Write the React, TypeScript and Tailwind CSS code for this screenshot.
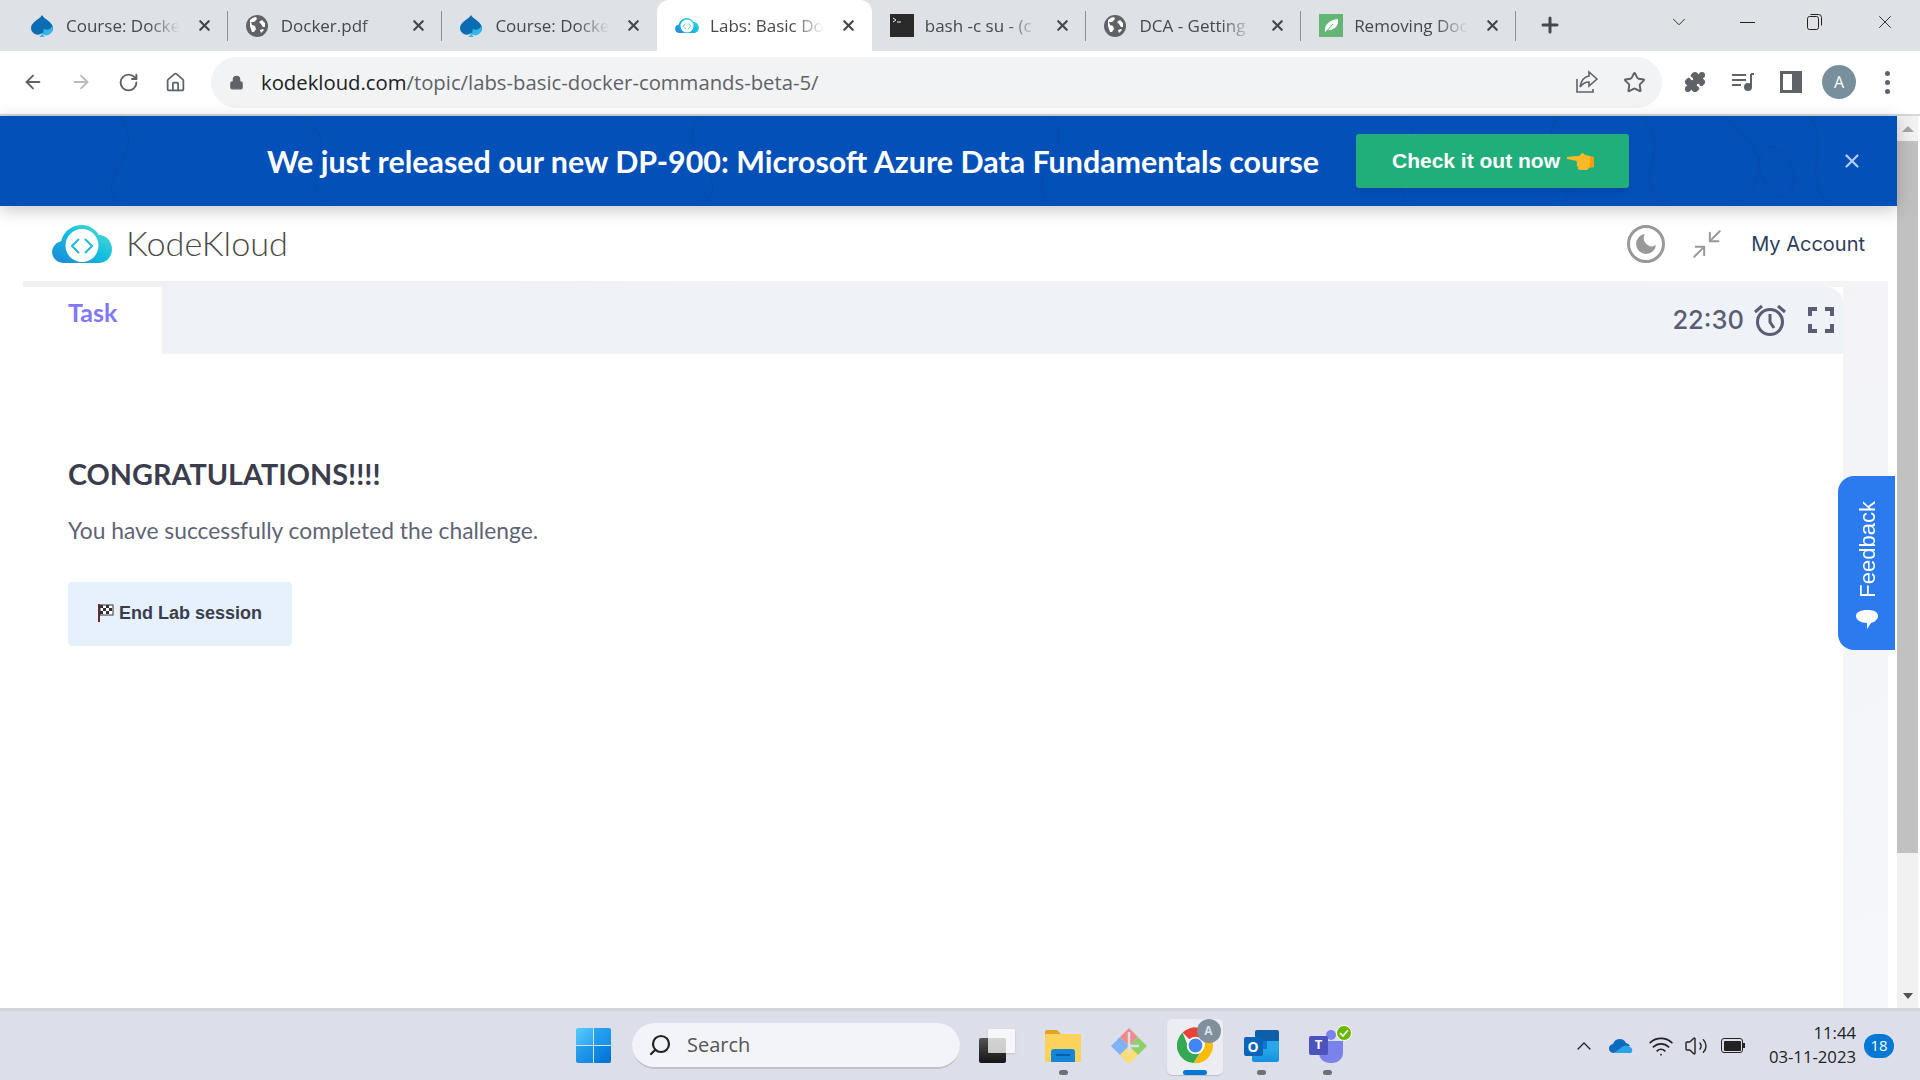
// KodeKloud lab tamamlandi ekrani: Chrome + sayfa + Windows gorev cubugu

import { ArrowLeft, ArrowRight, RotateCw, Home, Lock, Star, Puzzle, X, Plus, ChevronDown, Minimize2, Search, ChevronUp, Wifi, Volume2 } from "lucide-react";
import type { ReactNode } from "react";

const SANS = "font-['Open_Sans','Noto_Sans',sans-serif]";

function CourseIcon() {
  return (
    <svg width="22" height="22" viewBox="0 0 24 24">
      <path d="M12 0 C15 5 24 8 24 14 a7.5 7.5 0 0 1-12 6 a7.5 7.5 0 0 1-12-6 C0 8 9 5 12 0z" fill="#0a6db3" />
      <path d="M13 21 a7 7 0 0 0 10-9 a6 6 0 0 1-9 3 z" fill="#35b5e8" />
      <path d="M9 24 q3-2 3-5 q1 3 3 5z" fill="#35b5e8" />
    </svg>
  );
}

function GlobeIcon() {
  return (
    <svg width="22" height="22" viewBox="0 0 22 22">
      <circle cx="11" cy="11" r="11" fill="#5f6368" />
      <path d="M4 5 q3-3 6-3 l1 2-3 3-3 0 1 3 3 1 1 3-2 3-2 0-2-6z" fill="#fff" />
      <path d="M16 5 l3 3 0 4-2 0-2-3-2-2z" fill="#fff" />
      <path d="M14 15 l3-1 1 1-3 3z" fill="#fff" />
    </svg>
  );
}

function KodeKloudLogo({ w = 60, h = 38, id }: { w?: number; h?: number; id: string }) {
  return (
    <svg width={w} height={h} viewBox="0 0 60 38">
      <defs>
        <linearGradient id={id} x1="0" y1="1" x2="1" y2="0">
          <stop offset="0" stopColor="#1c86d8" />
          <stop offset="0.55" stopColor="#14c0e0" />
          <stop offset="1" stopColor="#62e0c8" />
        </linearGradient>
      </defs>
      <path d="M11 38 a11 11 0 0 1-2-21.8 C12 6 20 0 30 0 c8 0 14 5 17 10 c7 0 13 6 13 14 c0 8-6 14-13 14z" fill={`url(#${id})`} />
      <circle cx="30" cy="20.5" r="16.5" fill="#fff" />
      <path d="M27 14 l-7 7 7 7 M33 14 l7 7-7 7" fill="none" stroke="#1cb8e0" strokeWidth="2" />
    </svg>
  );
}

function BashIcon() {
  return (
    <svg width="24" height="23" viewBox="0 0 24 23">
      <rect width="24" height="23" fill="#2a2a2a" />
      <path d="M3 4 l3 2-3 2 M7 8h4" stroke="#eee" strokeWidth="1" fill="none" />
    </svg>
  );
}

function LeafIcon() {
  return (
    <svg width="24" height="23" viewBox="0 0 24 23">
      <rect width="24" height="23" fill="#62b574" />
      <path d="M6 18 C5 10 11 6 19 5 C20 12 15 17 8 16 L6 19z" fill="#fff" />
      <path d="M6 19 L14 10" stroke="#62b574" strokeWidth="1" />
    </svg>
  );
}

const tabs: { title: string; icon: ReactNode; active?: boolean; sep?: boolean }[] = [
  { title: "Course: Docke", icon: <CourseIcon />, sep: true },
  { title: "Docker.pdf", icon: <GlobeIcon />, sep: true },
  { title: "Course: Docke", icon: <CourseIcon /> },
  { title: "Labs: Basic Do", icon: <KodeKloudLogo w={24} h={15} id="kk-fav" />, active: true },
  { title: "bash -c su - (c", icon: <BashIcon />, sep: true },
  { title: "DCA - Getting", icon: <GlobeIcon />, sep: true },
  { title: "Removing Doc", icon: <LeafIcon />, sep: true },
];

function ChromeTab({ title, icon, active, sep }: { title: string; icon: ReactNode; active?: boolean; sep?: boolean }) {
  return (
    <div className={`relative flex h-[51px] w-[214.7px] items-center pl-[18px] ${active ? "rounded-t-[12px] bg-white" : ""}`}>
      <div className="flex w-[35px] shrink-0 items-center">{icon}</div>
      <div className={`w-[114px] overflow-hidden whitespace-nowrap text-[17px] text-[#45484d] [mask-image:linear-gradient(to_right,black_72%,transparent_100%)] ${SANS}`}>
        {title}
      </div>
      <X size={17} strokeWidth={3} className="ml-[16px] shrink-0 text-[#44474c]" />
      {sep && <div className="ml-[14px] h-[30px] w-px shrink-0 bg-[#8d9095]" />}
    </div>
  );
}

function TabStrip() {
  return (
    <div className="flex h-[51px] shrink-0 items-start bg-[#dee1e6] pl-[13px]">
      {tabs.map((t, i) => (
        <ChromeTab key={i} {...t} />
      ))}
      <Plus size={24} strokeWidth={3} className="mt-[13px] ml-[22px] text-[#45484d]" />
      <ChevronDown size={22} strokeWidth={1} className="mt-[11px] ml-[106px] text-[#222]" />
      <div className="mt-[22px] ml-[50px] h-px w-[15px] bg-[#222]" />
      <svg width="16" height="18" viewBox="0 0 16 18" className="mt-[13px] ml-[52px]" fill="none" stroke="#222">
        <rect x="0.5" y="3.5" width="11" height="13" rx="2" />
        <path d="M3.5 1.5 h8 a3 3 0 0 1 3 3 v8" />
      </svg>
      <X size={22} strokeWidth={1} className="mt-[11px] ml-[51px] text-[#222]" />
    </div>
  );
}

function Toolbar() {
  return (
    <div className="flex h-[65px] shrink-0 items-center border-b-2 border-[#d3d6db] bg-white pb-[1px]">
      <div className="flex w-[211px] items-center gap-[26px] pl-[22px]">
        <ArrowLeft size={22} className="text-[#5f6368]" />
        <ArrowRight size={22} className="text-[#b9bbbe]" />
        <RotateCw size={21} strokeWidth={2.2} className="text-[#5f6368]" />
        <Home size={21} className="text-[#5f6368]" />
      </div>
      <div className="flex h-[51px] w-[1451px] items-center rounded-full bg-[#f1f3f4] pr-[16px] pl-[18px]">
        <Lock size={15} fill="#5f6368" className="shrink-0 text-[#5f6368]" />
        <span className={`ml-[17px] text-[20.3px] text-[#5f6368] ${SANS}`}>
          <span className="text-[#202124]">kodekloud.com</span>/topic/labs-basic-docker-commands-beta-5/
        </span>
        <div className="flex-1" />
        <svg width="24" height="24" viewBox="0 0 24 24" fill="none" stroke="#5f6368" strokeWidth="1.6" className="mr-[-1px]">
          <path d="M2 9v13h16v-3" />
          <path d="M22 9 L14 2 v4 c-6 1-8 5-9 11 c3-4 5-5 9-5 v4z" />
        </svg>
        <Star size={23} strokeWidth={2} className="ml-[25px] text-[#5f6368]" />
      </div>
      <Puzzle size={22} fill="#5f6368" className="ml-[22px] text-[#5f6368]" />
      <svg width="24" height="22" viewBox="0 0 24 22" fill="none" stroke="#5f6368" strokeWidth="2" className="ml-[25px]">
        <path d="M1 4h14 M1 9h14 M1 14h9" />
        <path d="M20 3v13" />
        <path d="M20 3h3" />
        <circle cx="17" cy="16" r="3" fill="#5f6368" />
      </svg>
      <div className="ml-[25px] flex h-[22px] w-[22px] border-[3px] border-[#5f6368]">
        <div className="ml-auto h-full w-[7px] bg-[#5f6368]" />
      </div>
      <div className={`ml-[20px] flex h-[34px] w-[34px] items-center justify-center rounded-full bg-[#78909c] text-[16px] text-white ${SANS}`}>A</div>
      <div className="ml-[29px] flex flex-col gap-[4px]">
        <div className="h-[5px] w-[5px] rounded-full bg-[#5f6368]" />
        <div className="h-[5px] w-[5px] rounded-full bg-[#5f6368]" />
        <div className="h-[5px] w-[5px] rounded-full bg-[#5f6368]" />
      </div>
    </div>
  );
}

function Banner() {
  return (
    <div className="relative z-10 flex h-[90px] shrink-0 items-center overflow-hidden bg-[#0450b9] pl-[267px] shadow-[0_4px_16px_rgba(0,0,0,0.22)]">
      <svg className="absolute inset-0" width="1897" height="90" fill="none" stroke="#0849ad" strokeWidth="1">
        <path d="M1400 0 c40 30-20 60 10 90 M1560 0 c-30 30 30 60 0 90 M1640 0 c40 40-20 60 30 90 M1720 0 c50 30 50 70 10 90 M1770 30 c30 10 30 50 10 50 c-20-10-30-40-10-50z M1810 0 c20 30-10 60 20 90 M120 0 c30 40-30 60 0 90 M300 0 c50 30-10 60 30 90 M700 0 c-30 40 40 60 0 90 M1050 0 c30 30-30 60 0 90" />
      </svg>
      <span className="relative pt-[1px] font-['Lato',sans-serif] text-[30.4px] font-bold whitespace-nowrap text-white">
        We just released our new DP-900: Microsoft Azure Data Fundamentals course
      </span>
      <div className="relative ml-auto flex h-[54px] w-[273px] shrink-0 items-center rounded-[3px] bg-[#20ae7b] pl-[36px] font-['Liberation_Sans',sans-serif] text-[21px] font-bold text-white shadow-md">
        Check it out now
        <svg width="27" height="17" viewBox="0 0 27 17" className="ml-[7px]">
          <path d="M0 4 q7-1 12-1 l3-3 q2 0 3 2 l5 1 v11 l-3 3 h-7 q-3-1-2-3 q-2-1-1-3 q-1-1 0-3 l-10-2z" fill="#fbb829" />
          <path d="M23 3 l4 1 v10 l-4 1z" fill="#f59e0b" />
        </svg>
      </div>
      <X size={22} strokeWidth={2.4} className="relative mr-[34px] ml-[212px] shrink-0 text-[#b9cdef]" />
    </div>
  );
}

function PageHeader() {
  return (
    <div className="flex h-[75px] shrink-0 items-center pr-[32px] pl-[52px]">
      <KodeKloudLogo id="kk-main" />
      <span className="ml-[14px] pb-[2px] font-['Lato',sans-serif] text-[34.3px] font-light text-[#4a4a4a]">KodeKloud</span>
      <div className="ml-auto flex h-[38px] w-[38px] items-center justify-center rounded-full border-[3px] border-[#999]">
        <svg width="20" height="20" viewBox="0 0 20 20">
          <path d="M9 0 a10 10 0 1 0 11 11 a8 8 0 0 1-11-11z" fill="#999" />
        </svg>
      </div>
      <Minimize2 size={34} strokeWidth={1.4} className="ml-[25px] text-[#999]" />
      <span className="ml-[27px] font-['Inter',sans-serif] text-[20px] text-[#2d3e5a]">My Account</span>
    </div>
  );
}

function LabPanel() {
  return (
    <div className="mr-[9px] ml-[23px] flex-1 bg-gradient-to-br from-[#f0f0f5] to-[#f6f7fa] pt-[6px]">
      <div className="mr-[45px] h-full bg-white">
        <div className="flex h-[67px]">
          <div className="w-[139px] pt-[7px] pl-[45px] font-['Lato',sans-serif] text-[25px] font-bold text-[#8077fb]">Task</div>
          <div className="flex flex-1 items-center justify-end rounded-tr-[16px] bg-[#eff3f8] pr-[9px]">
            <span className="font-['Inter',sans-serif] text-[25.5px] font-medium text-[#5a5d74]">22:30</span>
            <svg width="34" height="32" viewBox="0 0 34 32" fill="none" stroke="#5a5d74" strokeWidth="3" className="-mt-[2px] ml-[9px]">
              <circle cx="17" cy="18" r="12.5" />
              <path d="M17 10v8l4 6 M2 8 l7-6 M32 8 l-7-6" />
            </svg>
            <svg width="26" height="26" viewBox="0 0 26 26" fill="none" stroke="#5a5d74" strokeWidth="4" className="-mt-[2px] ml-[21px]">
              <path d="M2 9V2h7 M17 2h7v7 M24 17v7h-7 M9 24H2v-7" />
            </svg>
          </div>
        </div>
        <div className="px-[45px] pt-[102px]">
          <h1 className="font-['Lato',sans-serif] text-[28.8px] leading-[36px] font-bold text-[#3b3d4c]">CONGRATULATIONS!!!!</h1>
          <p className="mt-[23px] font-['Lato',sans-serif] text-[22.8px] leading-[30px] text-[#5f6475]">You have successfully completed the challenge.</p>
          <button className="mt-[37px] flex h-[64px] w-[224px] items-center rounded-[4px] bg-[#e6f1fd] pb-[2px] pl-[30px] font-['Liberation_Sans',sans-serif] text-[18px] font-bold text-[#3b3d4c]">
            <svg width="16" height="18" viewBox="0 0 16 18" className="mr-[5px]">
              <path d="M1 0v18" stroke="#6b2b2b" strokeWidth="2" />
              <rect x="2" y="1" width="13" height="10" fill="#fff" stroke="#333" />
              <path d="M2 1h3v3H2z M8 1h3v3H8z M5 4h3v3H5z M11 4h3v3h-3z M2 7h3v3H2z M8 7h3v3H8z" fill="#333" />
            </svg>
            End Lab session
          </button>
        </div>
      </div>
    </div>
  );
}

function FeedbackTab() {
  return (
    <div className="absolute top-[360px] right-[2px] z-20 flex h-[174px] w-[57px] flex-col items-center justify-end rounded-l-[16px] bg-[#2b7bef] pb-[20px]">
      <span className="mb-[6px] ml-[2px] rotate-180 font-['Liberation_Sans',sans-serif] text-[22px] leading-[26px] text-white [writing-mode:vertical-rl]">Feedback</span>
      <svg width="22" height="20" viewBox="0 0 22 20" className="mt-[6px]">
        <path d="M11 0 c7 0 11 2 11 6 c0 3-3 6-7 7 l-4 6 v-6 c-6 0-11-3-11-7 c0-4 5-6 11-6z" fill="#fff" />
      </svg>
    </div>
  );
}

function ScrollBar() {
  return (
    <div className="flex w-[21px] shrink-0 flex-col bg-[#f1f1f1]">
      <div className="flex h-[25px] items-center justify-center">
        <div className="h-0 w-0 border-x-[6px] border-b-[6px] border-x-transparent border-b-[#a3a3a3]" />
      </div>
      <div className="h-[712px] bg-[#c1c1c1]" />
      <div className="flex-1" />
      <div className="flex h-[25px] items-center justify-center">
        <div className="h-0 w-0 border-x-[5px] border-t-[6px] border-x-transparent border-t-[#505050]" />
      </div>
    </div>
  );
}

function WindowsLogo() {
  return (
    <div className="grid h-[35px] w-[35px] grid-cols-2 gap-[1.5px]">
      <div className="rounded-tl-[2px] bg-gradient-to-br from-[#55ccff] to-[#2aa5ef]" />
      <div className="rounded-tr-[2px] bg-gradient-to-br from-[#2aa5ef] to-[#1590e8]" />
      <div className="rounded-bl-[2px] bg-gradient-to-br from-[#2aa5ef] to-[#0f85e0]" />
      <div className="rounded-br-[2px] bg-gradient-to-br from-[#1590e8] to-[#0070d0]" />
    </div>
  );
}

function TaskSlot({ children, dot, active }: { children: ReactNode; dot?: boolean; active?: boolean }) {
  return (
    <div className="relative flex h-[72px] w-[66px] items-center justify-center">
      {active && <div className="absolute top-[9px] left-[5px] h-[56px] w-[56px] rounded-[5px] bg-[#ecedf3] shadow-[0_1px_1px_rgba(0,0,0,0.15)]" />}
      <div className="relative">{children}</div>
      {dot && <div className="absolute top-[60px] left-[29px] h-[5px] w-[9px] rounded-full bg-[#6e7076]" />}
      {active && <div className="absolute top-[60px] left-[21px] h-[5px] w-[24px] rounded-full bg-[#0078d4]" />}
    </div>
  );
}

function Taskbar() {
  return (
    <div className="flex h-[72px] shrink-0 items-center border-t-[3px] border-[#d3d5dc] bg-[#dcdfea] pl-[576px]">
      <WindowsLogo />
      <div className="ml-[21px] flex h-[46px] w-[328px] items-center rounded-full border-b-2 border-[#c0c2c9] bg-[#f3f4f9] pl-[16px]">
        <Search size={24} strokeWidth={2.2} className="scale-x-[-1] text-[#222]" />
        <span className={`ml-[15px] text-[20px] text-[#555] ${SANS}`}>Search</span>
      </div>
      <div className="ml-[4px] flex">
        <TaskSlot>
          <div className="relative h-[34px] w-[36px]">
            <div className="absolute bottom-0 left-0 h-[25px] w-[27px] rounded-[2px] bg-gradient-to-b from-[#555] to-[#151515]" />
            <div className="absolute top-0 right-0 h-[24px] w-[27px] rounded-[1px] bg-white/75 shadow-sm" />
          </div>
        </TaskSlot>
        <TaskSlot dot>
          <svg width="36" height="33" viewBox="0 0 36 33">
            <path d="M0 3 a2 2 0 0 1 2-2 h10 l4 4 h18 a2 2 0 0 1 2 2 v4 H0z" fill="#e0a526" />
            <rect y="5" width="36" height="28" rx="1" fill="#fbd35c" />
            <path d="M6 33 v-10 a3 3 0 0 1 3-3 h18 a3 3 0 0 1 3 3 v10z" fill="#1285d8" />
            <path d="M11 26h14" stroke="#0b5ea3" strokeWidth="2" />
          </svg>
        </TaskSlot>
        <TaskSlot>
          <svg width="36" height="36" viewBox="0 0 36 36">
            <path d="M18 18 L9 9 L0 18 L9 27z" fill="#7fb2f9" />
            <path d="M18 18 L9 9 L18 0 L27 9z" fill="#f08a8a" />
            <path d="M18 18 L27 9 L36 18 L27 27z" fill="#8cd06a" />
            <path d="M18 18 L27 27 L18 36 L9 27z" fill="#fbdc75" />
            <path d="M18 4v22 M18 18h10" stroke="#dcdfea" strokeWidth="2.5" />
          </svg>
        </TaskSlot>
        <TaskSlot active>
          <div className="relative">
            <svg width="37" height="37" viewBox="0 0 40 40">
              <path d="M20 20 L6 6 A19 19 0 0 1 37 12 L20 12z" fill="#ea4335" />
              <path d="M6 6 A19 19 0 0 0 18 39 L26 26 L14 26z" fill="#34a853" />
              <path d="M37 12 A19 19 0 0 1 18 39 L27 25 A8 8 0 0 0 27 12z" fill="#fbbc05" />
              <circle cx="20" cy="20" r="9.5" fill="#fff" />
              <circle cx="20" cy="20" r="7.5" fill="#4285f4" />
            </svg>
            <div className={`absolute -top-[8px] left-[20px] flex h-[24px] w-[24px] items-center justify-center rounded-full bg-[#7f8f9c] text-[12px] font-bold text-[#dcdfea] ${SANS}`}>A</div>
          </div>
        </TaskSlot>
        <TaskSlot dot>
          <div className="relative h-[32px] w-[35px]">
            <div className="absolute top-0 right-0 h-[11px] w-[24px] rounded-t-[2px] bg-[#0f5fa8]" />
            <div className="absolute top-[11px] right-0 grid h-[10px] w-[24px] grid-cols-2">
              <div className="bg-[#0f78d4]" />
              <div className="bg-[#28a8ea]" />
            </div>
            <div className="absolute right-0 bottom-0 h-[13px] w-[27px] rounded-b-[2px] bg-gradient-to-b from-[#28a8ea] to-[#1490df]" />
            <div className={`absolute top-[7px] left-0 flex h-[19px] w-[19px] items-center justify-center rounded-[2px] bg-[#0a64b8] text-[14px] font-bold text-white ${SANS}`}>O</div>
          </div>
        </TaskSlot>
        <TaskSlot dot>
          <div className="relative h-[36px] w-[36px]">
            <div className="absolute top-[2px] left-[17px] h-[10px] w-[10px] rounded-full bg-[#7b83eb]" />
            <div className="absolute top-[13px] left-[10px] h-[22px] w-[24px] rounded-b-[10px] bg-[#7b83eb]" />
            <div className={`absolute top-[8px] left-0 flex h-[19px] w-[19px] items-center justify-center rounded-[2px] bg-[#4b53bc] text-[13px] font-bold text-white ${SANS}`}>T</div>
            <div className="absolute -top-[3px] left-[27px] flex h-[16px] w-[16px] items-center justify-center rounded-full border border-white bg-[#6bb700]">
              <svg width="10" height="8" viewBox="0 0 10 8"><path d="M1 4l3 3 5-6" stroke="#fff" strokeWidth="1.6" fill="none" /></svg>
            </div>
          </div>
        </TaskSlot>
      </div>
      <ChevronUp size={24} strokeWidth={1.3} className="ml-[212px] text-[#222]" />
      <svg width="25" height="16" viewBox="0 0 25 16" className="ml-[13px]">
        <path d="M5 15 a4.5 4.5 0 0 1-1-9 a7 7 0 0 1 13-1 a5 5 0 0 1 4 3 l-7 2z" fill="#0d6bbf" />
        <path d="M5 15 L13 9 a6 6 0 0 1 8 0 a3.5 3.5 0 0 1 1 6z" fill="#29a3ea" />
      </svg>
      <Wifi size={26} strokeWidth={1.6} className="ml-[14px] text-[#222]" />
      <Volume2 size={24} strokeWidth={1.4} className="ml-[10px] text-[#222]" />
      <div className="ml-[13px] flex items-center">
        <div className="flex h-[15px] w-[22px] items-center rounded-[3px] border-[1.5px] border-[#222] p-[1.5px]">
          <div className="h-full w-full rounded-[1px] bg-[#222]" />
        </div>
        <div className="h-[5px] w-[2px] bg-[#222]" />
      </div>
      <div className={`ml-[auto] flex flex-col items-end pb-[2px] text-[16.7px] leading-[24px] text-[#222] ${SANS}`}>
        <span>11:44</span>
        <span>03-11-2023</span>
      </div>
      <div className={`mr-[26px] ml-[8px] flex h-[24px] w-[30px] items-center justify-center rounded-full bg-[#0078d4] text-[15px] text-white ${SANS}`}>18</div>
    </div>
  );
}

export default function App() {
  return (
    <div className="flex h-[1080px] w-[1920px] flex-col overflow-hidden bg-white">
      <TabStrip />
      <Toolbar />
      <div className="flex min-h-0 flex-1">
        <div className="relative flex min-w-0 flex-1 flex-col">
          <Banner />
          <PageHeader />
          <LabPanel />
          <FeedbackTab />
        </div>
        <ScrollBar />
        <div className="w-[2px] bg-white" />
      </div>
      <Taskbar />
    </div>
  );
}
